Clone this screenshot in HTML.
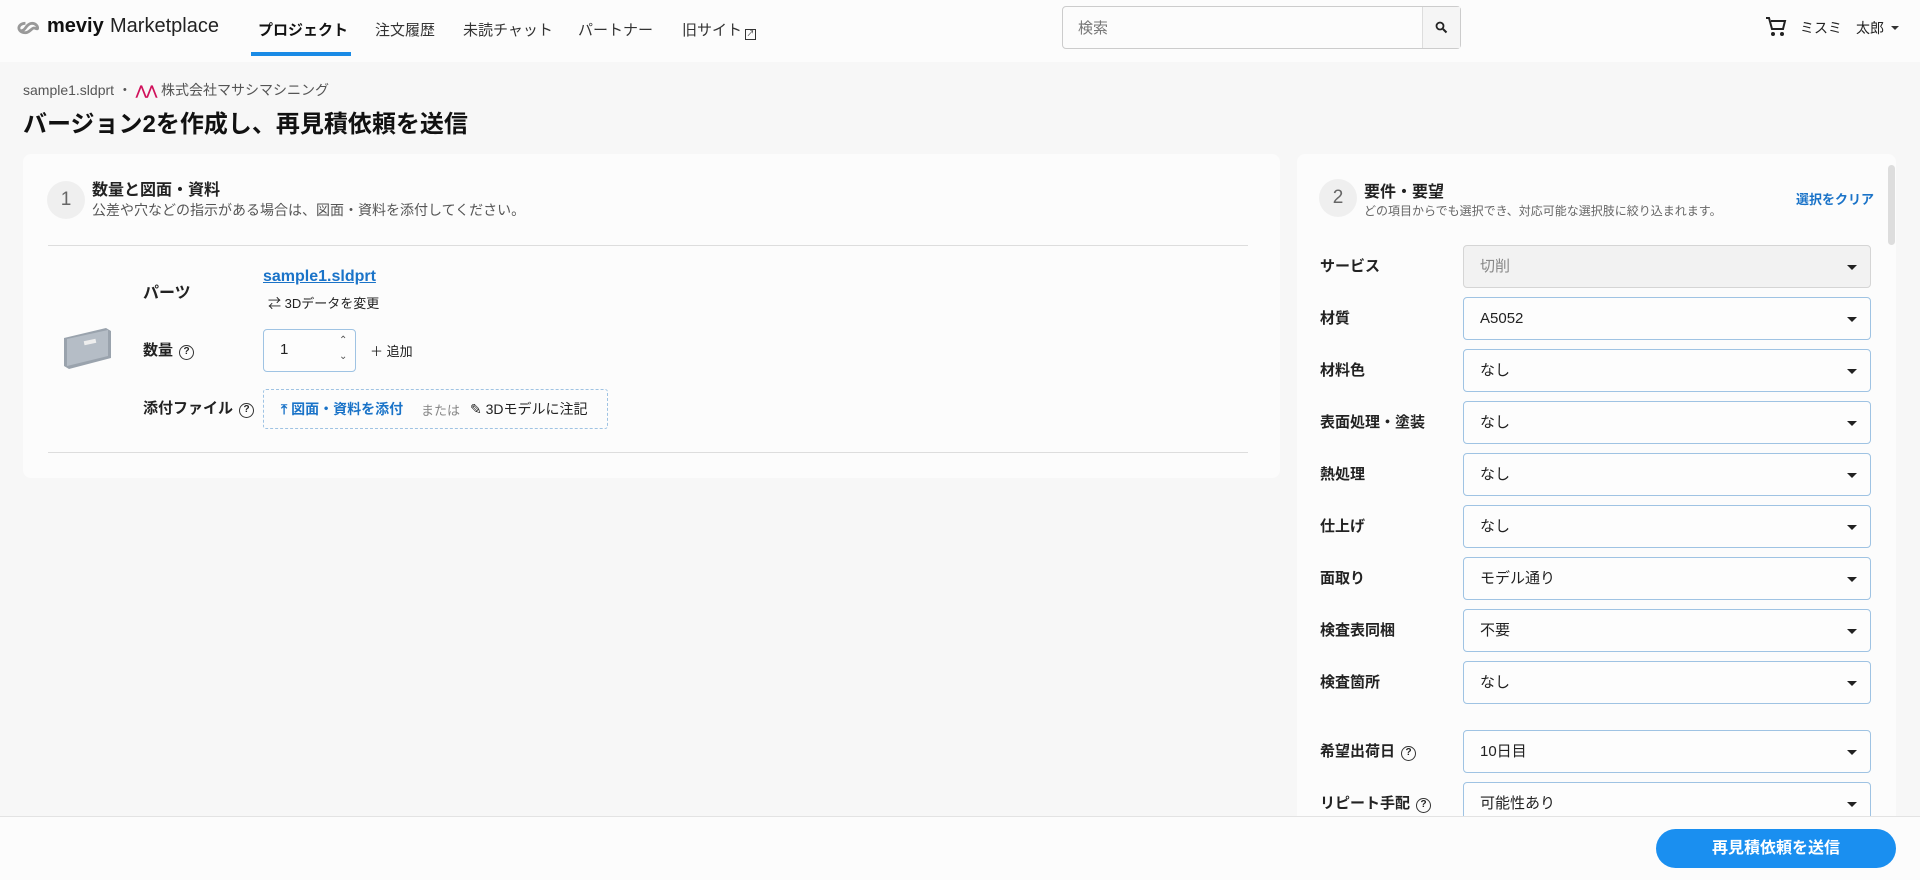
<!DOCTYPE html>
<html><head><meta charset="utf-8"><style>
*{box-sizing:border-box;margin:0;padding:0}
body{width:1920px;height:880px;overflow:hidden;background:#f7f7f7;font-family:"Liberation Sans","Noto Sans CJK JP",sans-serif;color:#222;position:relative}
.a{position:absolute;white-space:nowrap}
.hdr{position:absolute;left:0;top:0;width:1920px;height:62px;background:#fcfcfc}
.nav{font-size:15px;color:#333;top:19px}
.card{position:absolute;background:#fcfcfc;border-radius:8px}
.circ{position:absolute;width:38px;height:38px;border-radius:50%;background:#efefef;color:#666;font-size:19px;text-align:center;line-height:38px}
.lbl{font-size:15px;font-weight:bold;color:#222}
.sel{position:absolute;left:1463px;width:408px;height:43px;border:1px solid #9fc3e3;border-radius:4px;background:#fdfdfd;font-size:15px;line-height:41px;padding-left:16px;color:#222}
.sel:after{content:"";position:absolute;right:13px;top:19px;border-left:5px solid transparent;border-right:5px solid transparent;border-top:5px solid #222}
.q{display:inline-block;width:15px;height:15px;border:1.5px solid #333;border-radius:50%;font-size:10px;line-height:12px;text-align:center;font-weight:bold;vertical-align:1px;margin-left:6px}
</style></head><body>
<div class="hdr"></div>
<svg class="a" style="left:17px;top:20px" width="30" height="16" viewBox="0 0 32 16"><path d="M9 3C4 3 2 6 2 8s2 5 7 5c4 0 7-5 9-5s4 2 4 0-2-5-6-5c-3 0-5 2-7 5-2 3-4 3-5 3" fill="none" stroke="#999" stroke-width="3"/></svg>
<div class="a" style="left:47px;top:15px;font-size:20px;font-weight:bold;color:#111">meviy</div>
<div class="a" style="left:110px;top:15px;font-size:20px;color:#222">Marketplace</div>
<div class="a nav" style="left:258px;font-weight:bold;color:#111">プロジェクト</div>
<div class="a" style="left:251px;top:52px;width:100px;height:4px;background:#1a8be6"></div>
<div class="a nav" style="left:375px">注文履歴</div>
<div class="a nav" style="left:463px">未読チャット</div>
<div class="a nav" style="left:578px">パートナー</div>
<div class="a nav" style="left:682px">旧サイト<span style="display:inline-block;width:11px;height:11px;border:1.5px solid #333;margin-left:3px;vertical-align:-1px;font-size:8px;line-height:8px;text-align:center">↗</span></div>
<div class="a" style="left:1062px;top:6px;width:399px;height:43px;border:1px solid #ccc;border-radius:4px;background:#fcfcfc"></div>
<div class="a" style="left:1422px;top:7px;width:38px;height:41px;border-left:1px solid #ddd;background:#f5f5f5"></div>
<div class="a" style="left:1078px;top:17px;font-size:15px;color:#777">検索</div>
<svg class="a" style="left:1435px;top:21px" width="13" height="13" viewBox="0 0 13 13"><circle cx="5" cy="5" r="3.5" fill="none" stroke="#222" stroke-width="1.8"/><path d="M8 8l3.5 3.5" stroke="#222" stroke-width="2"/></svg>
<svg class="a" style="left:1764px;top:15px" width="24" height="24" viewBox="0 0 24 24"><path d="M2 3h3l3 11h11l2-8H7" fill="none" stroke="#222" stroke-width="2"/><circle cx="9" cy="19" r="2" fill="#222"/><circle cx="18" cy="19" r="2" fill="#222"/></svg>
<div class="a" style="left:1800px;top:18px;font-size:14px">ミスミ</div>
<div class="a" style="left:1856px;top:18px;font-size:14px">太郎</div>
<div class="a" style="left:1891px;top:26px;border-left:4px solid transparent;border-right:4px solid transparent;border-top:4px solid #333"></div>

<div class="a" style="left:23px;top:80px;font-size:14px;color:#555">sample1.sldprt ・ <span style="color:#d0115b;font-weight:bold;font-size:13px">⋀⋀</span> 株式会社マサシマシニング</div>
<div class="a" style="left:23px;top:104px;font-size:24px;font-weight:bold;color:#111">バージョン2を作成し、再見積依頼を送信</div>

<div class="card" style="left:23px;top:154px;width:1257px;height:324px"></div>
<div class="circ" style="left:47px;top:181px">1</div>
<div class="a" style="left:92px;top:176px;font-size:16px;font-weight:bold">数量と図面・資料</div>
<div class="a" style="left:92px;top:200px;font-size:14px;color:#555">公差や穴などの指示がある場合は、図面・資料を添付してください。</div>
<div class="a" style="left:48px;top:245px;width:1200px;height:1px;background:#ddd"></div>
<div class="a" style="left:48px;top:452px;width:1200px;height:1px;background:#ddd"></div>
<svg class="a" style="left:60px;top:326px" width="54" height="46" viewBox="0 0 54 46"><path d="M4 12L46 2l5 3v27L9 43l-5-3z" fill="#9aa3ad"/><path d="M7 13L48 4v26L7 40z" fill="#b5bdc6"/><rect x="24" y="14" width="12" height="4" fill="#eee" transform="rotate(-12 30 16)"/></svg>
<div class="a lbl" style="left:143px;top:279px;font-size:16px">パーツ</div>
<div class="a" style="left:263px;top:268px;font-size:16px;font-weight:bold;color:#1a73c8;text-decoration:underline">sample1.sldprt</div>
<div class="a" style="left:268px;top:293px;font-size:13px;color:#222">⇄ 3Dデータを変更</div>
<div class="a lbl" style="left:143px;top:339px">数量<span class="q">?</span></div>
<div class="a" style="left:263px;top:329px;width:93px;height:43px;border:1px solid #9fc3e3;border-radius:4px;background:#fdfdfd;font-size:15px;padding:11px 0 0 16px">1</div>
<div class="a" style="left:339px;top:333px;font-size:10px;color:#555;line-height:16px">⌃<br>⌄</div>
<div class="a" style="left:370px;top:341px;font-size:13px">＋ 追加</div>
<div class="a lbl" style="left:143px;top:397px">添付ファイル<span class="q">?</span></div>
<div class="a" style="left:263px;top:389px;width:345px;height:40px;border:1px dashed #9fc3e3;border-radius:3px"></div>
<div class="a" style="left:281px;top:399px;font-size:14px;font-weight:bold;color:#1a73c8">⤒ 図面・資料を添付</div>
<div class="a" style="left:421px;top:400px;font-size:13px;color:#888">または</div>
<div class="a" style="left:470px;top:399px;font-size:14px;color:#222">✎ 3Dモデルに注記</div>

<div class="card" style="left:1297px;top:154px;width:599px;height:700px"></div>
<div class="a" style="left:1888px;top:165px;width:7px;height:80px;border-radius:4px;background:#ddd"></div>
<div class="circ" style="left:1319px;top:179px">2</div>
<div class="a" style="left:1364px;top:178px;font-size:16px;font-weight:bold">要件・要望</div>
<div class="a" style="left:1364px;top:202px;font-size:12px;color:#666">どの項目からでも選択でき、対応可能な選択肢に絞り込まれます。</div>
<div class="a" style="left:1796px;top:189px;font-size:13px;font-weight:bold;color:#1a73c8">選択をクリア</div>

<div class="a lbl" style="left:1320px;top:255px">サービス</div>
<div class="sel" style="top:245px;background:#f2f2f2;border-color:#d5d5d5;color:#888">切削</div>
<div class="a lbl" style="left:1320px;top:307px">材質</div><div class="sel" style="top:297px">A5052</div>
<div class="a lbl" style="left:1320px;top:359px">材料色</div><div class="sel" style="top:349px">なし</div>
<div class="a lbl" style="left:1320px;top:411px">表面処理・塗装</div><div class="sel" style="top:401px">なし</div>
<div class="a lbl" style="left:1320px;top:463px">熱処理</div><div class="sel" style="top:453px">なし</div>
<div class="a lbl" style="left:1320px;top:515px">仕上げ</div><div class="sel" style="top:505px">なし</div>
<div class="a lbl" style="left:1320px;top:567px">面取り</div><div class="sel" style="top:557px">モデル通り</div>
<div class="a lbl" style="left:1320px;top:619px">検査表同梱</div><div class="sel" style="top:609px">不要</div>
<div class="a lbl" style="left:1320px;top:671px">検査箇所</div><div class="sel" style="top:661px">なし</div>
<div class="a lbl" style="left:1320px;top:740px">希望出荷日<span class="q">?</span></div><div class="sel" style="top:730px">10日目</div>
<div class="a lbl" style="left:1320px;top:792px">リピート手配<span class="q">?</span></div><div class="sel" style="top:782px">可能性あり</div>

<div class="a" style="left:0;top:816px;width:1920px;height:64px;background:#fcfcfc;border-top:1px solid #e3e3e3"></div>
<div class="a" style="left:1656px;top:829px;width:240px;height:39px;border-radius:20px;background:#1a8ff0;color:#fff;font-size:16px;font-weight:bold;text-align:center;line-height:39px">再見積依頼を送信</div>
</body></html>
